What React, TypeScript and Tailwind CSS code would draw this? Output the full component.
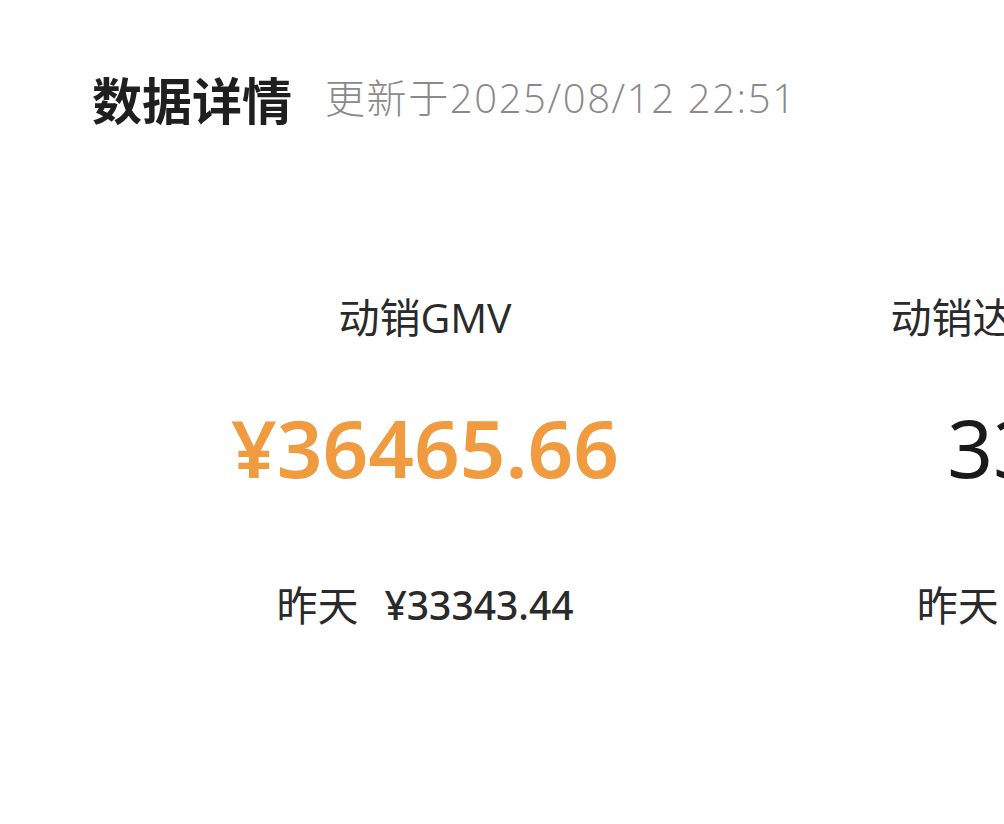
import React from "react";

type Metric = {
  label: string;
  value: string;
  yesterday: string;
  highlight?: boolean;
};

const metrics: Metric[] = [
  { label: "动销GMV", value: "¥36465.66", yesterday: "¥33343.44", highlight: true },
  { label: "动销达人数", value: "33", yesterday: "31" },
];

const base = "font-['Open_Sans','Noto_Sans_CJK_SC',sans-serif]";

export default function App() {
  return (
    <div className={`w-[1004px] h-[824px] overflow-hidden bg-white text-[#222] ${base}`}>
      <div className="flex items-center gap-[33px] pl-[92px] pt-[70px] h-[126px]">
        <h2 className="text-[50px] leading-[56px] font-bold text-[#1f1f1f] font-['Noto_Sans_CJK_SC',sans-serif]">
          数据详情
        </h2>
        <span className="text-[40px] leading-[56px] font-light text-[#8a8a8a] tracking-[1.6px]">
          更新于2025/08/12 22:51
        </span>
      </div>

      <div className="flex pl-[141px] mt-[167px]">
        {metrics.map((m) => (
          <div key={m.label} className="w-[568px] shrink-0 flex flex-col items-center">
            <div className="text-[41px] leading-[48px] text-[#2a2a2a]">{m.label}</div>
            <div
              className={`mt-[58px] text-[80px] leading-[96px] font-['Noto_Sans',sans-serif] ${
                m.highlight ? "font-semibold text-[#f09b3f]" : "font-normal text-[#1a1a1a]"
              }`}
            >
              {m.value}
            </div>
            <div className="mt-[86px] flex items-center gap-[26px] leading-[48px]">
              <span className="text-[41px] text-[#2a2a2a]">昨天</span>
              <span className="text-[39px] font-medium text-[#2a2a2a] font-['Noto_Sans',sans-serif]">
                {m.yesterday}
              </span>
            </div>
          </div>
        ))}
      </div>
    </div>
  );
}
